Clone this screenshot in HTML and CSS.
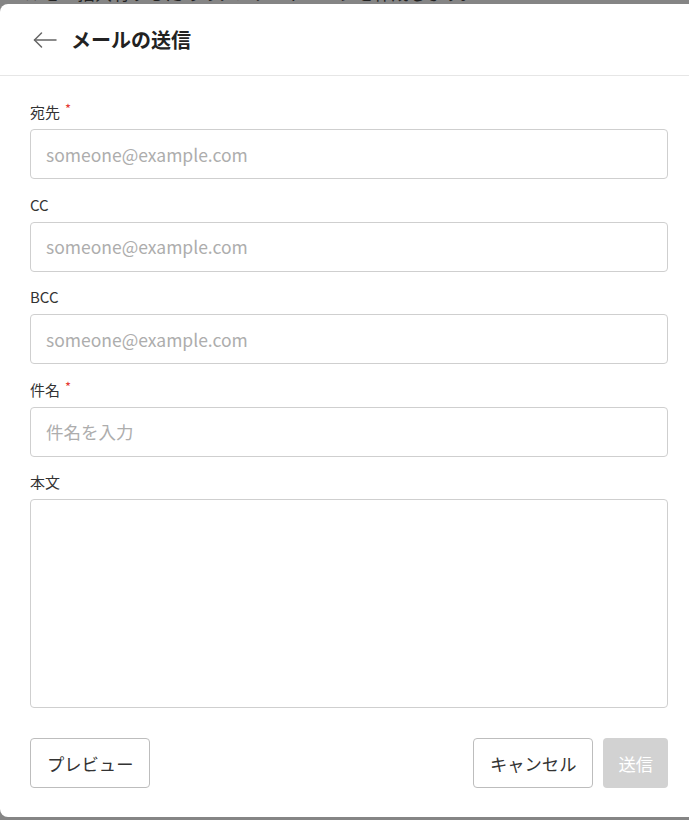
FILE: index.html
```html
<!DOCTYPE html>
<html lang="ja">
<head>
<meta charset="utf-8">
<title>メールの送信</title>
<link rel="stylesheet" href="styles.css">
</head>
<body>
<div class="page">
  <p class="page-text">メールを一括共有するためのアンケートページを作成します。</p>
</div>
<div class="overlay">
  <div class="modal">
    <div class="modal-header">
      <svg class="back" width="24" height="24" viewBox="0 0 24 24" fill="none" stroke="#666" stroke-width="1.5" stroke-linecap="round" stroke-linejoin="round"><path d="M1.5 12H23"/><path d="M8.5 5L1.5 12L8.5 19"/></svg>
      <h1 class="title">メールの送信</h1>
    </div>
    <div class="modal-body">
      <div class="field">
        <label class="label">宛先<span class="req">*</span></label>
        <input class="input" type="text" placeholder="someone@example.com">
      </div>
      <div class="field">
        <label class="label">CC</label>
        <input class="input" type="text" placeholder="someone@example.com">
      </div>
      <div class="field">
        <label class="label">BCC</label>
        <input class="input" type="text" placeholder="someone@example.com">
      </div>
      <div class="field">
        <label class="label">件名<span class="req">*</span></label>
        <input class="input" type="text" placeholder="件名を入力">
      </div>
      <div class="field">
        <label class="label">本文</label>
        <textarea class="textarea"></textarea>
      </div>
      <div class="footer">
        <button class="btn">プレビュー</button>
        <div class="btn-group">
          <button class="btn">キャンセル</button>
          <button class="btn btn-disabled" disabled>送信</button>
        </div>
      </div>
    </div>
  </div>
</div>
</body>
</html>
```
FILE: styles.css
```css
* { box-sizing: border-box; }
html, body {
  margin: 0;
  padding: 0;
  background: #fff;
  font-family: "Noto Sans CJK JP", "Noto Sans", sans-serif;
  overflow: hidden;
}
.page {
  height: 820px;
}
.page-text {
  margin: -17px 0 0 -10px;
  font-size: 17.5px;
  line-height: 20px;
  color: #444;
  white-space: nowrap;
}
.overlay {
  position: fixed;
  inset: 0;
  background: rgba(0, 0, 0, 0.48);
}
.modal {
  position: absolute;
  left: 0;
  top: 4px;
  width: 720px;
  background: #fff;
  border-radius: 8px;
}
.modal-header {
  height: 72px;
  display: flex;
  align-items: center;
  gap: 14px;
  padding: 0 0 0 33px;
  border-bottom: 1px solid #e6e6e6;
}
.back { display: block; flex: none; }
.title {
  margin: 0;
  font-size: 20px;
  font-weight: 700;
  color: #222;
  line-height: 28px;
}
.modal-body {
  padding: 26px 52px 29px 30px;
  display: flex;
  flex-direction: column;
  gap: 15.5px;
}
.field {
  display: flex;
  flex-direction: column;
  gap: 7px;
}
.label {
  display: block;
  height: 20px;
  font-size: 15px;
  line-height: 20px;
  color: #333;
}
.req {
  color: #e53935;
  font-size: 13px;
  line-height: 0;
  margin-left: 5px;
  vertical-align: 4px;
}
.input, .textarea {
  width: 100%;
  border: 1px solid #cfcfcf;
  border-radius: 4px;
  font-family: inherit;
  font-size: 17.5px;
  color: #333;
  background: #fff;
  outline: none;
}
.input {
  height: 50px;
  padding: 0 15px;
}
.textarea {
  height: 209px;
  resize: none;
  padding: 12px 15px;
  display: block;
}
.input::placeholder { color: #adadad; }
.footer {
  margin-top: 14.5px;
  display: flex;
  justify-content: space-between;
}
.btn-group {
  display: flex;
  gap: 10px;
}
.btn {
  height: 50px;
  padding: 0 16px;
  border: 1px solid #bdbdbd;
  border-radius: 4px;
  background: #fff;
  color: #333;
  font-family: inherit;
  font-size: 17.3px;
}
.btn-disabled {
  background: #d2d2d2;
  border: none;
  padding: 0 15px;
  color: #fff;
}
```
